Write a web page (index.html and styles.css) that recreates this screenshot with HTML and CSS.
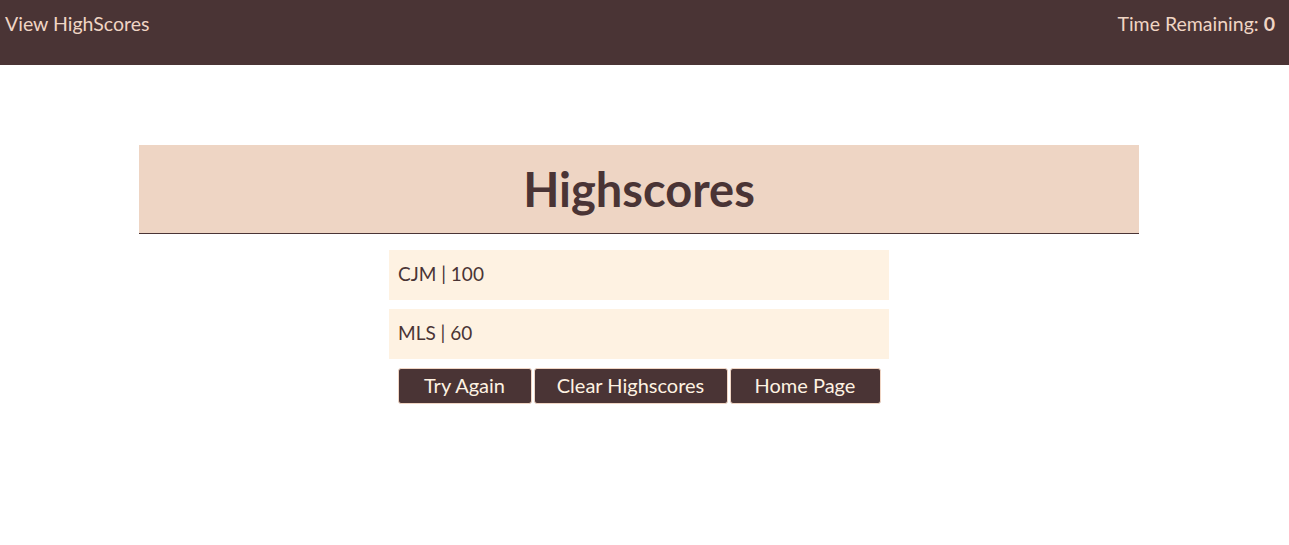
FILE: index.html
```html
<!DOCTYPE html>
<html>
<head>
<meta charset="utf-8">
<link rel="stylesheet" href="styles.css">
</head>
<body>
<header class="topbar">
  <a class="view-link">View HighScores</a>
  <div class="timer">Time Remaining: <span class="time-value">0</span></div>
</header>
<main class="content">
  <section class="panel">
    <h1 class="panel-title">Highscores</h1>
  </section>
  <div class="scores">
    <ul class="score-list">
      <li class="score-item">CJM | 100</li>
      <li class="score-item">MLS | 60</li>
    </ul>
    <div class="actions">
      <button class="btn btn-try">Try Again</button>
      <button class="btn btn-clear">Clear Highscores</button>
      <button class="btn btn-home">Home Page</button>
    </div>
  </div>
</main>
</body>
</html>
```
FILE: styles.css
```css
* { box-sizing: border-box; }
html, body { margin: 0; padding: 0; background: #ffffff; }
body { font-family: "Lato", "Open Sans", sans-serif; color: #4a3435; }

.topbar {
  height: 65px;
  background: #4a3435;
  display: flex;
  justify-content: space-between;
  align-items: flex-start;
  padding: 12px 14px 0 5px;
  color: #f0d5c4;
  font-size: 19.5px;
}
.view-link { color: #f0d5c4; cursor: pointer; }
.time-value { font-weight: 700; }

.content {
  display: flex;
  flex-direction: column;
  align-items: center;
  padding-top: 80px;
  padding-right: 11px;
}
.panel {
  width: 1000px;
  height: 89px;
  background: #eed5c4;
  border-bottom: 1px solid #4a3435;
  display: flex;
  align-items: center;
  justify-content: center;
}
.panel-title {
  margin: 0;
  font-size: 47px;
  font-weight: 700;
  color: #4a3435;
  line-height: 1;
}
.scores {
  width: 500px;
  margin-top: 16px;
}
.score-list {
  list-style: none;
  margin: 0;
  padding: 0;
  display: flex;
  flex-direction: column;
  gap: 9px;
}
.score-item {
  height: 50px;
  background: #fef2e2;
  padding: 12px 9px 0;
  font-size: 19px;
  color: #4a3435;
}
.actions {
  display: flex;
  justify-content: center;
  gap: 2px;
  margin-top: 9px;
}
.btn {
  height: 36px;
  background: #4a3435;
  color: #fef2e2;
  border: 1px solid #f0d5c4;
  border-radius: 3px;
  font-family: inherit;
  font-size: 20px;
  padding: 0 12px 2px;
}
.btn-try { width: 134px; }
.btn-clear { width: 194px; }
.btn-home { width: 151px; }
```
